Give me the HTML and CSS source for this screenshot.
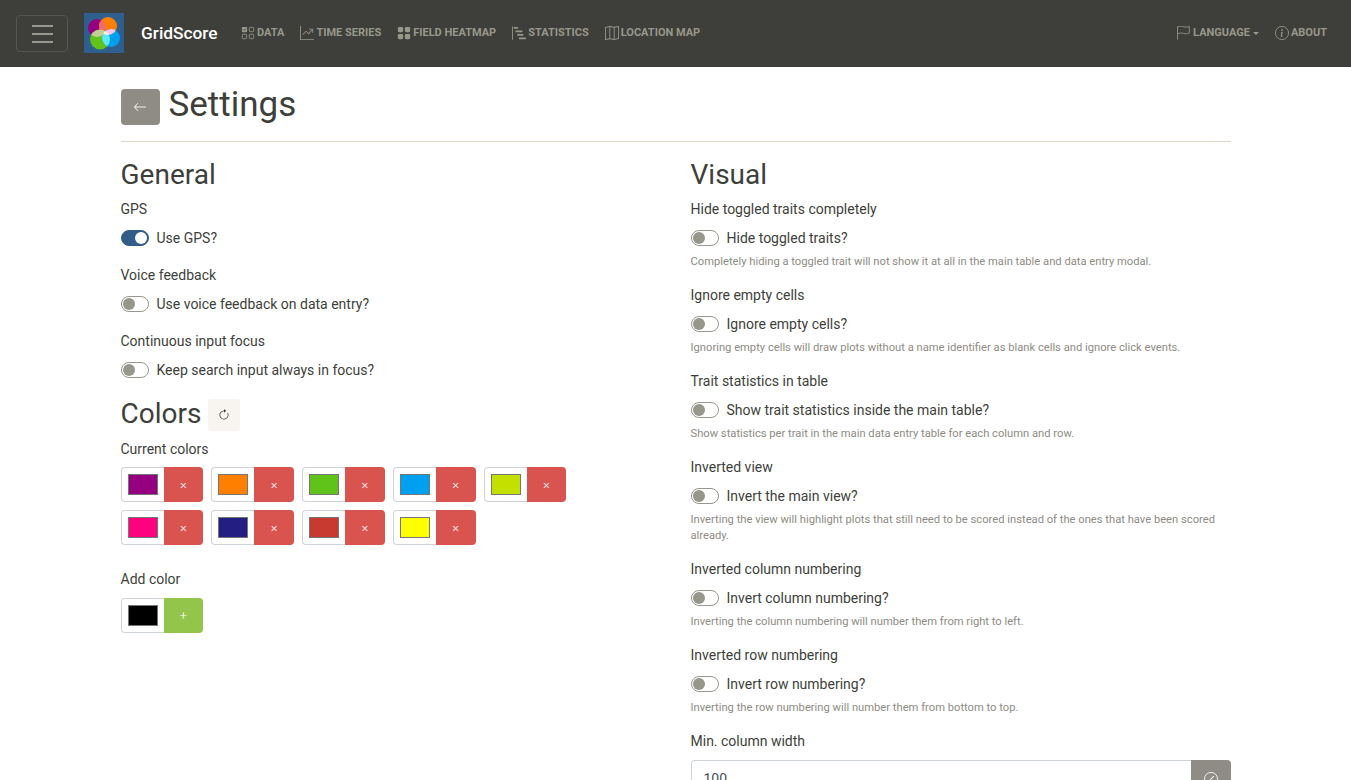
FILE: index.html
```html
<!DOCTYPE html>
<html lang="en">
<head>
    <meta charset="UTF-8">
    <meta name="viewport" content="width=device-width, initial-scale=1.0">
    <title>GridScore - Settings</title>
    <link rel="stylesheet" href="styles.css">
</head>
<body>
    <nav class="navbar">
        <button class="menu-toggle" aria-label="Menu"><span></span><span></span><span></span></button>
        <svg class="logo" viewBox="0 0 40 40">
            <defs>
                <clipPath id="clipPurple"><circle cx="13" cy="15" r="9"/></clipPath>
                <clipPath id="clipOrange"><circle cx="24" cy="13" r="9"/></clipPath>
                <clipPath id="clipGreen"><circle cx="16" cy="26.5" r="10"/></clipPath>
                <clipPath id="clipBlue"><circle cx="27" cy="25" r="9"/></clipPath>
            </defs>
            <rect width="40" height="40" fill="#2f5f8f"/>
            <circle cx="13" cy="15" r="9" fill="#940080"/>
            <circle cx="24" cy="13" r="9" fill="#ff7f00"/>
            <circle cx="16" cy="26.5" r="10" fill="#5fc31a"/>
            <circle cx="27" cy="25" r="9" fill="#00a0f0"/>
            <circle cx="24" cy="13" r="9" fill="#f06a6a" clip-path="url(#clipPurple)"/>
            <circle cx="16" cy="26.5" r="10" fill="#c3cf92" clip-path="url(#clipPurple)"/>
            <circle cx="27" cy="25" r="9" fill="#fbc6ee" clip-path="url(#clipOrange)"/>
            <circle cx="27" cy="25" r="9" fill="#5fe6f0" clip-path="url(#clipGreen)"/>
            <g clip-path="url(#clipOrange)"><circle cx="16" cy="26.5" r="10" fill="#fdf3e0" clip-path="url(#clipBlue)"/></g>
        </svg>
        <a class="brand" href="#">GridScore</a>
        <ul class="nav-links">
            <li><a href="#">
                <svg class="icon" viewBox="0 0 16 16"><rect x="1" y="1" width="6" height="6" rx="1"/><path class="check" d="M2.500 4l1 1 2-2"/><path class="line" d="M10.500 1.500h3a1 1 0 0 1 1 1v3a1 1 0 0 1-1 1h-3a1 1 0 0 1-1-1v-3a1 1 0 0 1 1-1zM2.500 9.500h3a1 1 0 0 1 1 1v3a1 1 0 0 1-1 1h-3a1 1 0 0 1-1-1v-3a1 1 0 0 1 1-1zM10.500 9.500h3a1 1 0 0 1 1 1v3a1 1 0 0 1-1 1h-3a1 1 0 0 1-1-1v-3a1 1 0 0 1 1-1z"/></svg>Data</a></li>
            <li><a href="#">
                <svg class="icon" viewBox="0 0 16 16"><path d="M0 0h1v16H0V0zm1 15h15v1H1v-1z"/><path d="M14.390 4.312L10.041 9.750 7 6.707l-3.646 3.647-.708-.708L7 5.293 9.959 8.250l3.650-4.563.781.625z"/><path d="M10 3.500a.5.5 0 0 1 .5-.5h4a.5.5 0 0 1 .5.5v4a.5.5 0 0 1-1 0V4h-3.500a.5.5 0 0 1-.5-.5z"/></svg>Time series</a></li>
            <li><a href="#">
                <svg class="icon" viewBox="0 0 16 16"><rect x="1" y="1" width="6" height="6" rx="1.500"/><rect x="9" y="1" width="6" height="6" rx="1.500"/><rect x="1" y="9" width="6" height="6" rx="1.500"/><rect x="9" y="9" width="6" height="6" rx="1.500"/></svg>Field heatmap</a></li>
            <li><a href="#">
                <svg class="icon" viewBox="0 0 16 16"><rect x="0" y="0" width="1" height="16" rx=".5"/><rect x="2" y="1" width="5" height="2" rx=".5"/><rect x="4" y="5" width="8" height="2" rx=".5"/><rect x="6" y="9" width="7" height="2" rx=".5"/><rect x="8" y="13" width="8" height="2" rx=".5"/></svg>Statistics</a></li>
            <li><a href="#">
                <svg class="icon" viewBox="0 0 16 16"><path fill-rule="evenodd" d="M15.817.113A.5.5 0 0 1 16 .5v14a.5.5 0 0 1-.402.490l-5 1a.502.502 0 0 1-.196 0L5.500 15.010l-4.902.980A.5.5 0 0 1 0 15.500v-14a.5.5 0 0 1 .402-.490l5-1a.5.5 0 0 1 .196 0L10.500.990l4.902-.980a.5.5 0 0 1 .415.103zM10 1.910l-4-.800v12.980l4 .800V1.910zm1 12.980l4-.800V1.110l-4 .800v12.980zm-6-.800V1.110l-4 .800v12.980l4-.800z"/></svg>Location map</a></li>
        </ul>
        <ul class="nav-links nav-right">
            <li><a href="#">
                <svg class="icon" viewBox="0 0 16 16"><path class="line" d="M.5 15.500V.8C3 0 5.500 0 7.500.9c2 .7 4.500.3 6.500-.4V8c-2 .9-4.500 1.200-6.500.5C5.500 7.700 3 8 .5 9"/></svg>Language<span class="caret"></span></a></li>
            <li><a href="#">
                <svg class="icon" viewBox="0 0 16 16"><circle class="line" cx="8" cy="8" r="7.500"/><path d="M8.930 6.588l-2.290.287-.082.380.450.083c.294.070.352.176.288.469l-.738 3.468c-.194.897.105 1.319.808 1.319.545 0 1.178-.252 1.465-.598l.088-.416c-.2.176-.492.246-.686.246-.275 0-.375-.193-.304-.533L8.930 6.588zM9 4.500a1 1 0 1 1-2 0 1 1 0 0 1 2 0z"/></svg>About</a></li>
        </ul>
    </nav>

    <main class="container">
        <header class="page-title">
            <button class="btn-back" aria-label="Back">
                <svg viewBox="0 0 16 16"><path d="M15 8a.5.5 0 0 0-.5-.5H2.707l3.147-3.146a.5.5 0 1 0-.708-.708l-4 4a.5.5 0 0 0 0 .708l4 4a.5.5 0 0 0 .708-.708L2.707 8.500H14.500A.5.5 0 0 0 15 8z"/></svg>
            </button>
            <h1>Settings</h1>
        </header>
        <hr>

        <div class="columns">
            <section class="column">
                <h2>General</h2>
                <div class="form-group">
                    <label>GPS</label>
                    <div class="switch on"><i></i><span>Use GPS?</span></div>
                </div>
                <div class="form-group">
                    <label>Voice feedback</label>
                    <div class="switch"><i></i><span>Use voice feedback on data entry?</span></div>
                </div>
                <div class="form-group">
                    <label>Continuous input focus</label>
                    <div class="switch"><i></i><span>Keep search input always in focus?</span></div>
                </div>

                <div class="colors-title">
                    <h2>Colors</h2>
                    <button class="btn-reset" aria-label="Reset">
                        <svg viewBox="0 0 16 16"><path d="M8 3a5 5 0 1 0 4.546 2.914.5.5 0 0 1 .908-.417A6 6 0 1 1 8 2v1z"/><path d="M8 4.466V.534a.25.25 0 0 1 .41-.192l2.360 1.966c.12.1.12.284 0 .384L8.410 4.658A.25.25 0 0 1 8 4.466z"/></svg>
                    </button>
                </div>
                <div class="form-group">
                    <label class="tight">Current colors</label>
                    <div class="color-list">
                        <div class="color-pill"><span class="swatch-box"><b class="swatch purple"></b></span><button class="pill-btn remove">&times;</button></div>
                        <div class="color-pill"><span class="swatch-box"><b class="swatch orange"></b></span><button class="pill-btn remove">&times;</button></div>
                        <div class="color-pill"><span class="swatch-box"><b class="swatch green"></b></span><button class="pill-btn remove">&times;</button></div>
                        <div class="color-pill"><span class="swatch-box"><b class="swatch blue"></b></span><button class="pill-btn remove">&times;</button></div>
                        <div class="color-pill"><span class="swatch-box"><b class="swatch lime"></b></span><button class="pill-btn remove">&times;</button></div>
                        <div class="color-pill"><span class="swatch-box"><b class="swatch pink"></b></span><button class="pill-btn remove">&times;</button></div>
                        <div class="color-pill"><span class="swatch-box"><b class="swatch navy"></b></span><button class="pill-btn remove">&times;</button></div>
                        <div class="color-pill"><span class="swatch-box"><b class="swatch red"></b></span><button class="pill-btn remove">&times;</button></div>
                        <div class="color-pill"><span class="swatch-box"><b class="swatch yellow"></b></span><button class="pill-btn remove">&times;</button></div>
                    </div>
                </div>
                <div class="form-group add-color">
                    <label>Add color</label>
                    <div class="color-list">
                        <div class="color-pill"><span class="swatch-box"><b class="swatch black"></b></span><button class="pill-btn add">+</button></div>
                    </div>
                </div>
            </section>

            <section class="column">
                <h2>Visual</h2>
                <div class="form-group">
                    <label>Hide toggled traits completely</label>
                    <div class="switch"><i></i><span>Hide toggled traits?</span></div>
                    <small>Completely hiding a toggled trait will not show it at all in the main table and data entry modal.</small>
                </div>
                <div class="form-group">
                    <label>Ignore empty cells</label>
                    <div class="switch"><i></i><span>Ignore empty cells?</span></div>
                    <small>Ignoring empty cells will draw plots without a name identifier as blank cells and ignore click events.</small>
                </div>
                <div class="form-group">
                    <label>Trait statistics in table</label>
                    <div class="switch"><i></i><span>Show trait statistics inside the main table?</span></div>
                    <small>Show statistics per trait in the main data entry table for each column and row.</small>
                </div>
                <div class="form-group">
                    <label>Inverted view</label>
                    <div class="switch"><i></i><span>Invert the main view?</span></div>
                    <small>Inverting the view will highlight plots that still need to be scored instead of the ones that have been scored already.</small>
                </div>
                <div class="form-group">
                    <label>Inverted column numbering</label>
                    <div class="switch"><i></i><span>Invert column numbering?</span></div>
                    <small>Inverting the column numbering will number them from right to left.</small>
                </div>
                <div class="form-group">
                    <label>Inverted row numbering</label>
                    <div class="switch"><i></i><span>Invert row numbering?</span></div>
                    <small>Inverting the row numbering will number them from bottom to top.</small>
                </div>
                <div class="form-group">
                    <label>Min. column width</label>
                    <div class="input-group">
                        <input type="text" value="100">
                        <button class="btn-clear" aria-label="Clear">
                            <svg viewBox="0 0 16 16"><circle class="line" cx="8" cy="8" r="7.500"/><path d="M11.354 4.646a.5.5 0 0 0-.708 0l-6 6a.5.5 0 0 0 .708.708l6-6a.5.5 0 0 0 0-.708z"/></svg>
                        </button>
                    </div>
                </div>
            </section>
        </div>
    </main>
</body>
</html>
```

FILE: styles.css
```css
html, body {
    height: 100%;
    overflow: hidden;
}

body {
    margin: 0;
    font-family: Roboto, "Liberation Sans", sans-serif;
    font-size: 14px;
    line-height: 1.5;
    color: #3e3f3a;
    background: #fff;
}

ul {
    list-style: none;
    margin: 0;
    padding: 0;
}

a {
    color: inherit;
    text-decoration: none;
}

button {
    font-family: inherit;
    border: none;
    padding: 0;
    cursor: pointer;
}

svg .line {
    fill: none;
    stroke: currentColor;
    stroke-width: 1;
}

/* navbar */
.navbar {
    display: flex;
    align-items: center;
    height: 67px;
    padding: 0 16px;
    box-sizing: border-box;
    background: #3e3f3a;
}

.menu-toggle {
    display: flex;
    flex-direction: column;
    justify-content: center;
    gap: 6px;
    align-items: center;
    width: 52px;
    height: 37px;
    background: transparent;
    border: 1px solid #55564f;
    border-radius: 4px;
}

.menu-toggle span {
    display: block;
    width: 21px;
    height: 2px;
    background: #98978b;
}

.logo {
    width: 40px;
    height: 40px;
    margin: 0 0 1px 16px;
}

.brand {
    width: 78px;
    margin-left: 17px;
    font-size: 17.300px;
    font-weight: 500;
    color: #fff;
}

.nav-links {
    display: flex;
    margin-left: 22px;
    gap: 16px;
}

.nav-links a {
    display: flex;
    align-items: center;
    font-size: 11px;
    font-weight: 700;
    text-transform: uppercase;
    color: #98978b;
}

.nav-right {
    margin-left: auto;
    margin-right: 8px;
}

.icon {
    width: 14px;
    height: 14px;
    margin: 0 2px 2px 0;
    fill: currentColor;
}

.icon .check {
    fill: none;
    stroke: #3e3f3a;
    stroke-width: 1;
}

.caret {
    width: 0;
    height: 0;
    margin-left: 3px;
    border-top: 3.500px solid currentColor;
    border-left: 3.500px solid transparent;
    border-right: 3.500px solid transparent;
}

/* page */
.container {
    width: 1110px;
    margin: 0 auto;
}

.page-title {
    display: flex;
    align-items: center;
    gap: 9px;
    padding-top: 17px;
}

h1 {
    margin: 0;
    font-size: 35px;
    font-weight: 400;
    line-height: 42px;
}

.btn-back {
    display: flex;
    align-items: center;
    justify-content: center;
    width: 39px;
    height: 36px;
    margin-top: 4px;
    background: #8e8c84;
    border-radius: 4px;
}

.btn-back svg {
    width: 14px;
    height: 14px;
    fill: #f0efe9;
}

hr {
    margin: 15px 0 16px;
    border: none;
    border-top: 1px solid #dfd7ca;
}

.columns {
    display: grid;
    grid-template-columns: 540px 540px;
    gap: 30px;
}

h2 {
    margin: 0 0 7px;
    font-size: 28px;
    font-weight: 400;
    line-height: 33.600px;
}

.form-group {
    margin-bottom: 16px;
}

label {
    display: block;
    margin-bottom: 8px;
}

label.tight {
    margin-bottom: 7px;
}

small {
    display: block;
    margin: 5px 0 -1px;
    font-size: 11.200px;
    line-height: 16px;
    color: #8e8c84;
}

/* switches */
.switch {
    display: flex;
    align-items: center;
    gap: 8px;
    height: 21px;
}

.switch i {
    position: relative;
    width: 28px;
    height: 16px;
    box-sizing: border-box;
    border: 1px solid #98978b;
    border-radius: 8px;
    background: #fff;
}

.switch i::after {
    content: "";
    position: absolute;
    top: 1px;
    left: 1px;
    width: 12px;
    height: 12px;
    border-radius: 50%;
    background: #98978b;
}

.switch.on i {
    background: #325d88;
    border-color: #325d88;
}

.switch.on i::after {
    left: 13px;
    background: #fff;
}

/* colors */
.colors-title {
    display: flex;
    align-items: flex-start;
    gap: 7px;
    margin-bottom: 8px;
}

.colors-title h2 {
    margin: 0;
}

.btn-reset {
    display: flex;
    align-items: center;
    justify-content: center;
    width: 32px;
    height: 32px;
    margin-top: 2px;
    background: #f8f5f0;
    border-radius: 3px;
    color: #3e3f3a;
}

.btn-reset svg {
    width: 12px;
    height: 12px;
    fill: currentColor;
}

.color-list {
    display: flex;
    flex-wrap: wrap;
    gap: 8px;
    width: 460px;
}

.color-pill {
    display: flex;
    height: 35px;
}

.swatch-box {
    display: flex;
    align-items: center;
    width: 43px;
    box-sizing: border-box;
    padding-left: 6px;
    border: 1px solid #ced4da;
    border-right: none;
    border-radius: 4px 0 0 4px;
}

.swatch {
    display: block;
    width: 30px;
    height: 21px;
    box-sizing: border-box;
    border: 1px solid #767676;
}

.purple { background: #940080; }
.orange { background: #ff7f00; }
.green { background: #5fc31a; }
.blue { background: #00a0f0; }
.lime { background: #c4e000; }
.pink { background: #ff007f; }
.navy { background: #231f82; }
.red { background: #c83a2f; }
.yellow { background: #ffff00; }
.black { background: #000; }

.pill-btn {
    width: 39.750px;
    color: #fff;
    font-size: 13px;
    font-weight: 300;
    border-radius: 0 4px 4px 0;
}

.pill-btn.remove {
    background: #d9534f;
}

.pill-btn.add {
    background: #93c54b;
}

.add-color {
    margin-top: 24px;
}

/* input */
.input-group {
    display: flex;
    height: 38px;
}

.input-group input {
    flex: 1;
    min-width: 0;
    padding: 6px 12px;
    box-sizing: border-box;
    font-family: inherit;
    font-size: 14px;
    color: #495057;
    border: 1px solid #ced4da;
    border-right: none;
    border-radius: 4px 0 0 4px;
}

.btn-clear {
    display: flex;
    align-items: center;
    justify-content: center;
    width: 40px;
    color: #fff;
    background: #8e8c84;
    border-radius: 0 4px 4px 0;
}

.btn-clear svg {
    width: 14px;
    height: 14px;
    fill: currentColor;
}
```
